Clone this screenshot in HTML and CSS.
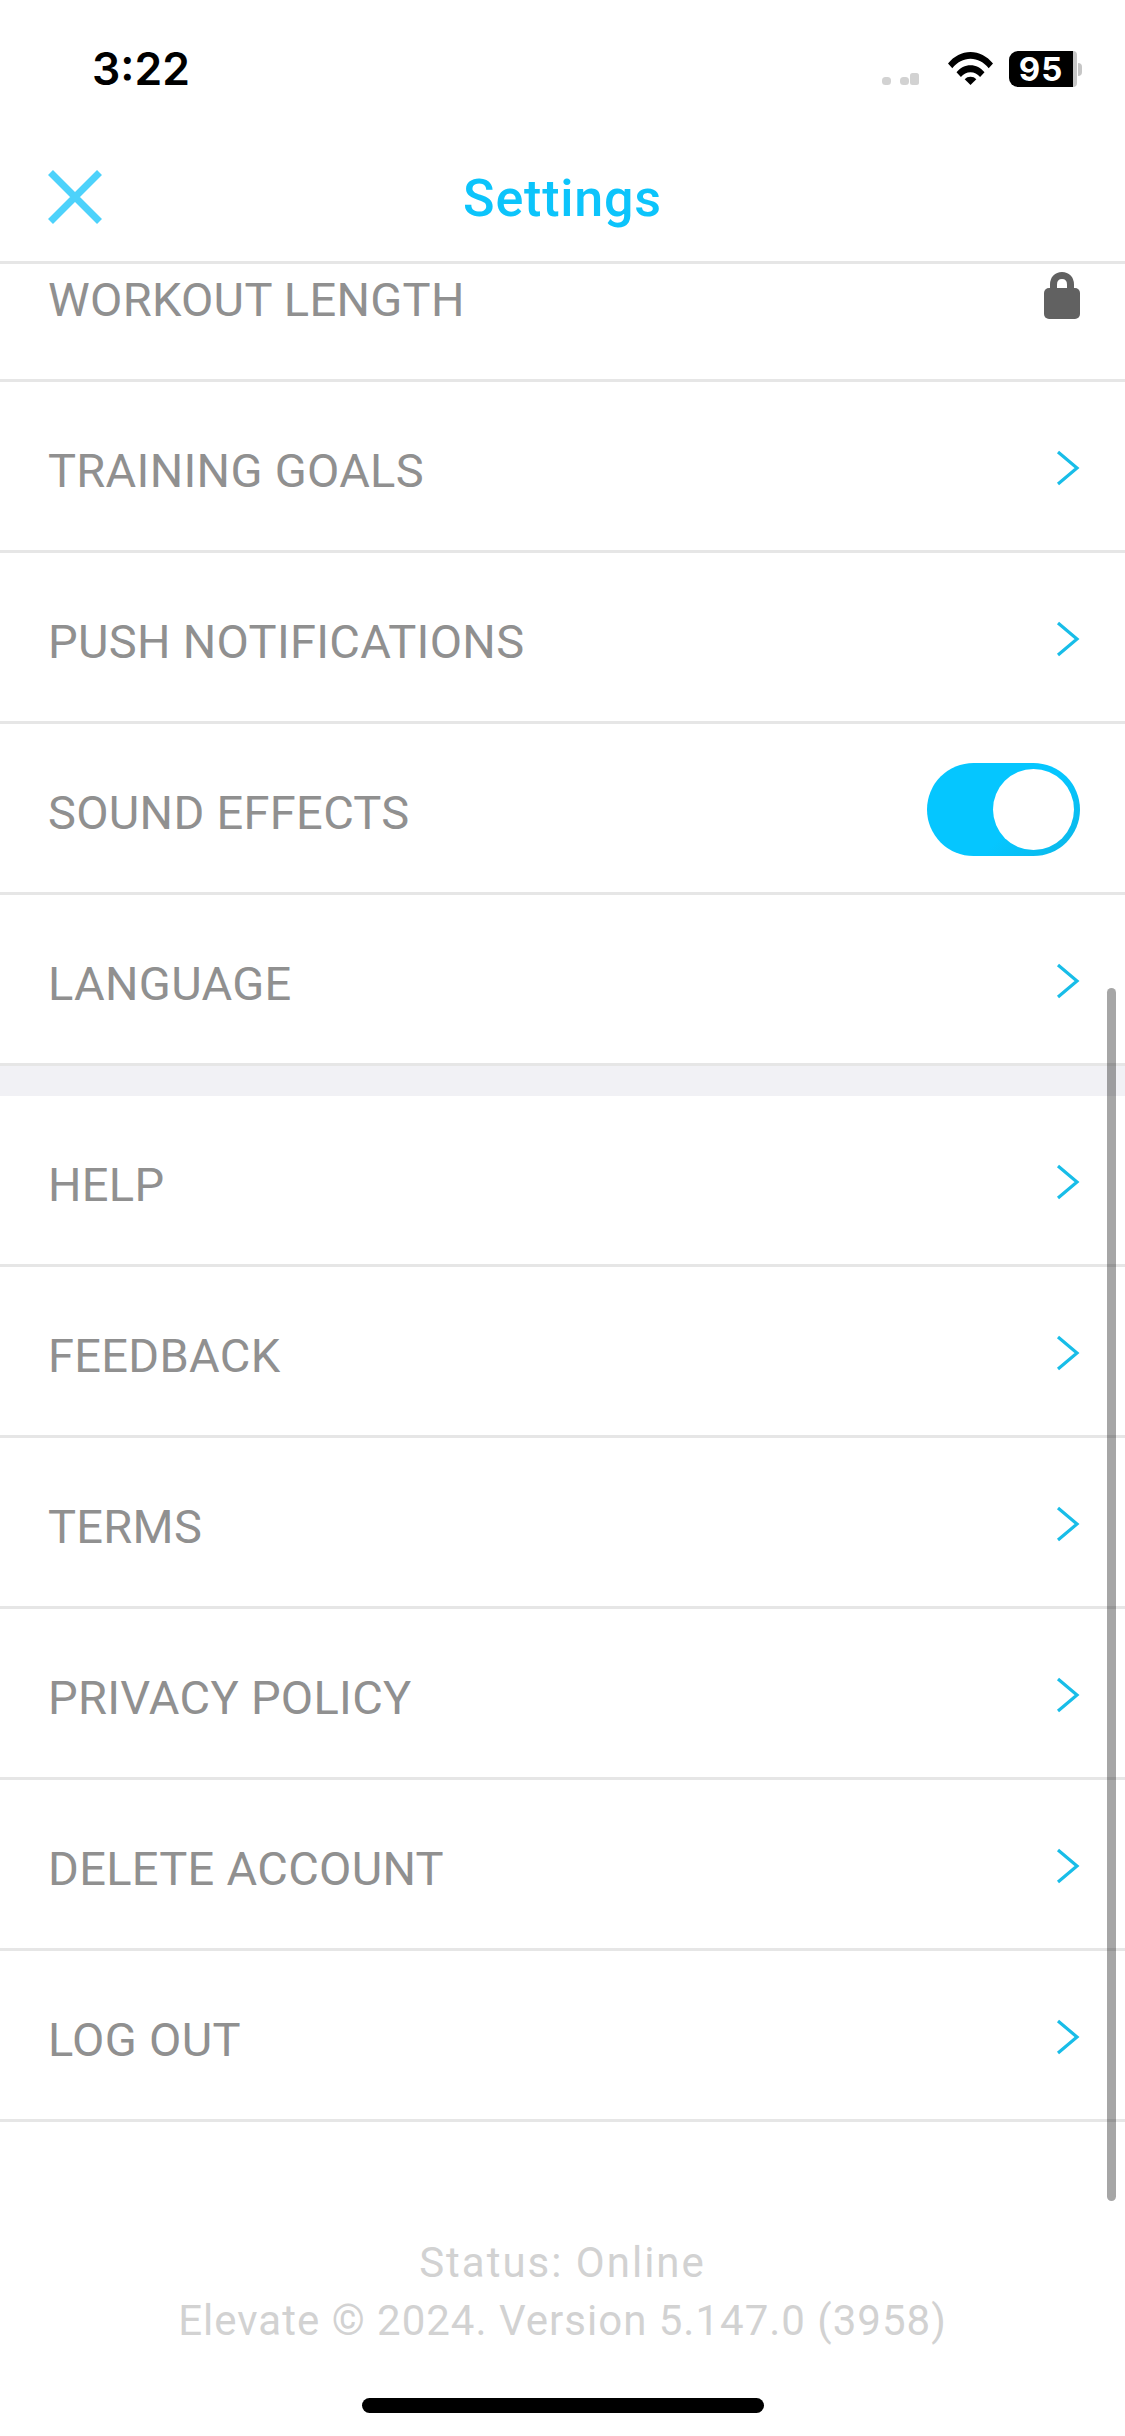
FILE: index.html
```html
<!DOCTYPE html>
<html lang="en">
<head>
<meta charset="utf-8">
<title>Settings</title>
<link rel="stylesheet" href="styles.css">
</head>
<body>
<div class="screen">
  <div class="statusbar">
    <span class="time">3:22</span>
    <div class="status-icons">
      <svg class="dots" width="37" height="12" viewBox="0 0 37 12"><rect x="0" y="4" width="9" height="8" rx="3.5"/><rect x="18" y="4" width="9" height="8" rx="3.5"/><rect x="28" y="0" width="9" height="12" rx="2.5"/></svg>
      <svg class="wifi" width="45" height="33" viewBox="0 0 45 33"><path d="M0 11.5C6 4.2 14 0 22.5 0S39 4.2 45 11.5l-4.300 4.700C35.800 10.200 29.500 6.800 22.500 6.800S9.200 10.200 4.300 16.200Z"/><path d="M8.500 20.300C12.200 15.800 17.100 13.300 22.500 13.300S32.800 15.800 36.500 20.300l-4.400 4.600C29.500 21.900 26.200 20.200 22.500 20.200S15.500 21.900 12.900 24.900Z"/><path d="M16.700 27.200C18.200 25.500 20.200 24.700 22.500 24.700S26.800 25.500 28.300 27.200L22.500 33Z"/></svg>
      <div class="battery">
        <span class="battery-fill">95</span>
        <span class="battery-rest"></span>
        <span class="battery-nub"></span>
      </div>
    </div>
  </div>

  <header class="navbar">
    <svg class="close" width="54" height="54" viewBox="0 0 54 54"><path d="M2.500 2.500L51.500 51.500M51.500 2.500L2.500 51.500"/></svg>
    <h1 class="title">Settings</h1>
  </header>

  <div class="scroller">
    <ul class="list">
      <li class="row"><span class="label">WORKOUT LENGTH</span>
        <svg class="lock" width="36" height="47" viewBox="0 0 36 47"><path class="lock-shackle" d="M9.500 18V12.500C9.500 7 13 3.500 18 3.500S26.500 7 26.500 12.500V18"/><rect class="lock-body" x="0" y="16" width="36" height="31" rx="5"/></svg>
      </li>
      <li class="row"><span class="label">TRAINING GOALS</span>
        <svg class="chevron" width="24" height="36" viewBox="0 0 24 36"><path d="M2 2L21 18L2 34"/></svg>
      </li>
      <li class="row"><span class="label">PUSH NOTIFICATIONS</span>
        <svg class="chevron" width="24" height="36" viewBox="0 0 24 36"><path d="M2 2L21 18L2 34"/></svg>
      </li>
      <li class="row"><span class="label">SOUND EFFECTS</span>
        <div class="toggle"><span class="knob"></span></div>
      </li>
      <li class="row"><span class="label">LANGUAGE</span>
        <svg class="chevron" width="24" height="36" viewBox="0 0 24 36"><path d="M2 2L21 18L2 34"/></svg>
      </li>
    </ul>
    <div class="gap"></div>
    <ul class="list">
      <li class="row"><span class="label">HELP</span>
        <svg class="chevron" width="24" height="36" viewBox="0 0 24 36"><path d="M2 2L21 18L2 34"/></svg>
      </li>
      <li class="row"><span class="label">FEEDBACK</span>
        <svg class="chevron" width="24" height="36" viewBox="0 0 24 36"><path d="M2 2L21 18L2 34"/></svg>
      </li>
      <li class="row"><span class="label">TERMS</span>
        <svg class="chevron" width="24" height="36" viewBox="0 0 24 36"><path d="M2 2L21 18L2 34"/></svg>
      </li>
      <li class="row"><span class="label">PRIVACY POLICY</span>
        <svg class="chevron" width="24" height="36" viewBox="0 0 24 36"><path d="M2 2L21 18L2 34"/></svg>
      </li>
      <li class="row"><span class="label">DELETE ACCOUNT</span>
        <svg class="chevron" width="24" height="36" viewBox="0 0 24 36"><path d="M2 2L21 18L2 34"/></svg>
      </li>
      <li class="row"><span class="label">LOG OUT</span>
        <svg class="chevron" width="24" height="36" viewBox="0 0 24 36"><path d="M2 2L21 18L2 34"/></svg>
      </li>
    </ul>
    <footer class="footer">
      <p class="footer-status">Status: Online</p>
      <p>Elevate © 2024. Version 5.147.0 (3958)</p>
    </footer>
  </div>

  <div class="scrollbar"></div>
  <div class="home-indicator"></div>
</div>
</body>
</html>
```
FILE: styles.css
```css
* { box-sizing: border-box; }
html, body { margin: 0; padding: 0; background: #fff; }
.screen {
  position: relative;
  width: 1125px;
  height: 2436px;
  overflow: hidden;
  background: #fff;
  display: flex;
  flex-direction: column;
  font-family: Roboto, "Liberation Sans", sans-serif;
}
.statusbar {
  height: 140px;
  flex: none;
  display: flex;
  align-items: flex-start;
  justify-content: space-between;
  padding: 51px 43px 0 92px;
}
.time {
  font-family: Inter, "Liberation Sans", sans-serif;
  font-size: 44.500px;
  font-weight: 600;
  line-height: 36px;
  color: #000;
}
.status-icons { display: flex; align-items: flex-start; }
.dots { fill: #d2d2d2; margin-top: 22px; margin-right: 29px; }
.wifi { fill: #000; margin-top: 1px; margin-right: 16px; }
.battery { display: flex; align-items: center; height: 36px; }
.battery-fill {
  width: 64px;
  height: 36px;
  background: #000;
  border-radius: 9px 0 0 9px;
  color: #fff;
  font-family: Inter, "Liberation Sans", sans-serif;
  font-size: 33px;
  font-weight: 700;
  line-height: 36px;
  letter-spacing: 1px;
  text-align: center;
}
.battery-rest {
  width: 4px;
  height: 36px;
  background: #c6c6c6;
  border-radius: 0 9px 9px 0;
  margin-right: 1px;
}
.battery-nub {
  width: 4px;
  height: 13px;
  background: #c6c6c6;
  border-radius: 0 6px 6px 0;
}
.navbar {
  height: 124px;
  flex: none;
  position: relative;
  display: flex;
  align-items: center;
  justify-content: center;
  border-bottom: 3px solid #e6e6e6;
}
.close {
  position: absolute;
  left: 48px;
  top: 30px;
  fill: none;
  stroke: #4dd2fb;
  stroke-width: 7;
}
.title {
  margin: 0 0 3px;
  font-size: 52px;
  font-weight: 500;
  line-height: 60px;
  letter-spacing: 0.8px;
  color: #0cc4fb;
}
.scroller { flex: 1; min-height: 0; overflow: hidden; }
.list { list-style: none; margin: 0; padding: 0; }
.list:first-child { margin-top: -53px; }
.row {
  height: 171px;
  display: flex;
  align-items: center;
  justify-content: space-between;
  padding: 0 45px 0 48px;
  border-bottom: 3px solid #e6e6e6;
}
.label {
  font-size: 47px;
  font-weight: 400;
  line-height: 56px;
  letter-spacing: 0.3px;
  color: #909090;
  padding-top: 10px;
}
.chevron {
  fill: none;
  stroke: #18bde8;
  stroke-width: 3.200;
  margin-top: 4px;
}
.lock .lock-shackle { fill: none; stroke: #616161; stroke-width: 7; }
.lock .lock-body { fill: #616161; }
.toggle {
  width: 153px;
  height: 93px;
  margin-top: 2px;
  border-radius: 47px;
  background: linear-gradient(135deg, #05c6ff 60%, #0cb6e6 100%);
  display: flex;
  align-items: center;
  justify-content: flex-end;
  padding-right: 6px;
}
.knob { width: 81px; height: 81px; border-radius: 50%; background: #fff; }
.gap { height: 30px; background: #f1f1f5; }
.footer {
  margin-top: 112px;
  text-align: center;
  font-size: 42px;
  line-height: 58px;
  letter-spacing: 1px;
  color: #d2d2d2;
}
.footer p { margin: 0; }
.footer .footer-status { letter-spacing: 2px; }
.scrollbar {
  position: absolute;
  left: 1107px;
  top: 988px;
  width: 9px;
  height: 1213px;
  border-radius: 5px;
  background: rgba(0, 0, 0, 0.35);
}
.home-indicator {
  position: absolute;
  left: 362px;
  top: 2398px;
  width: 402px;
  height: 15px;
  border-radius: 8px;
  background: #000;
}
```
